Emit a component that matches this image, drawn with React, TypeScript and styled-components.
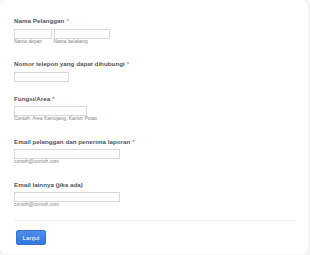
import React from "react";
import styled, { createGlobalStyle } from "styled-components";

const Global = createGlobalStyle`
  html, body { margin: 0; padding: 0; background: #f6f6f6; }
  body { font-family: "Liberation Sans", Arial, sans-serif; }
  * { box-sizing: border-box; }
`;

const Card = styled.div`
  width: 308px;
  height: 254px;
  background: #ffffff;
  border-radius: 6px;
  box-shadow: 0 0 2px rgba(0, 0, 0, 0.1);
  padding: 17.3px 12px 0 14px;
  display: flex;
  flex-direction: column;
`;

const Field = styled.div<{ $after: number }>`
  display: flex;
  flex-direction: column;
  align-items: flex-start;
  margin-bottom: ${(p) => p.$after}px;
`;

const Label = styled.div`
  font-size: 6.25px;
  line-height: 8px;
  font-weight: bold;
  color: #555555;
  margin-bottom: 3.5px;
  white-space: nowrap;
`;

const Req = styled.span`
  color: #e23b3b;
  font-weight: normal;
  margin-left: 2px;
`;

const Row = styled.div`
  display: flex;
  gap: 1.5px;
`;

const Col = styled.div`
  display: flex;
  flex-direction: column;
`;

const Input = styled.div<{ $w: number }>`
  width: ${(p) => p.$w}px;
  height: 10px;
  border: 1px solid #d8d8d8;
  background: #fff;
`;

const Sub = styled.div`
  font-size: 4.9px;
  line-height: 6px;
  color: #858585;
  white-space: nowrap;
`;

const Divider = styled.div`
  height: 1px;
  background: #ededed;
  margin-top: 11.5px;
`;

const Button = styled.button`
  margin: 9px 0 0 2px;
  width: 30px;
  height: 15px;
  padding: 0;
  border: 1px solid #3a74cc;
  border-radius: 2px;
  background: linear-gradient(#4d8ceb, #3477dc);
  color: #fff;
  font-family: "Liberation Sans", Arial, sans-serif;
  font-weight: normal;
  font-size: 6.2px;
  line-height: 13px;
  text-align: center;
`;

export default function App() {
  return (
    <>
      <Global />
      <Card>
        <Field $after={15.3}>
          <Label>
            Nama Pelanggan<Req>*</Req>
          </Label>
          <Row>
            <Col>
              <Input $w={38} />
              <Sub>Nama depan</Sub>
            </Col>
            <Col>
              <Input $w={56} />
              <Sub>Nama belakang</Sub>
            </Col>
          </Row>
        </Field>
        <Field $after={13.3}>
          <Label>
            Nomor telepon yang dapat dihubungi<Req>*</Req>
          </Label>
          <Input $w={55} />
        </Field>
        <Field $after={15.3}>
          <Label>
            Fungsi/Area<Req>*</Req>
          </Label>
          <Input $w={73} />
          <Sub>Contoh: Area Kamojang, Kantor Pusat</Sub>
        </Field>
        <Field $after={15.5}>
          <Label>
            Email pelanggan dan penerima laporan<Req>*</Req>
          </Label>
          <Input $w={106} />
          <Sub>contoh@contoh.com</Sub>
        </Field>
        <Field $after={0}>
          <Label>Email lainnya (jika ada)</Label>
          <Input $w={106} />
          <Sub>contoh@contoh.com</Sub>
        </Field>
        <Divider />
        <div>
          <Button>Lanjut</Button>
        </div>
      </Card>
    </>
  );
}
